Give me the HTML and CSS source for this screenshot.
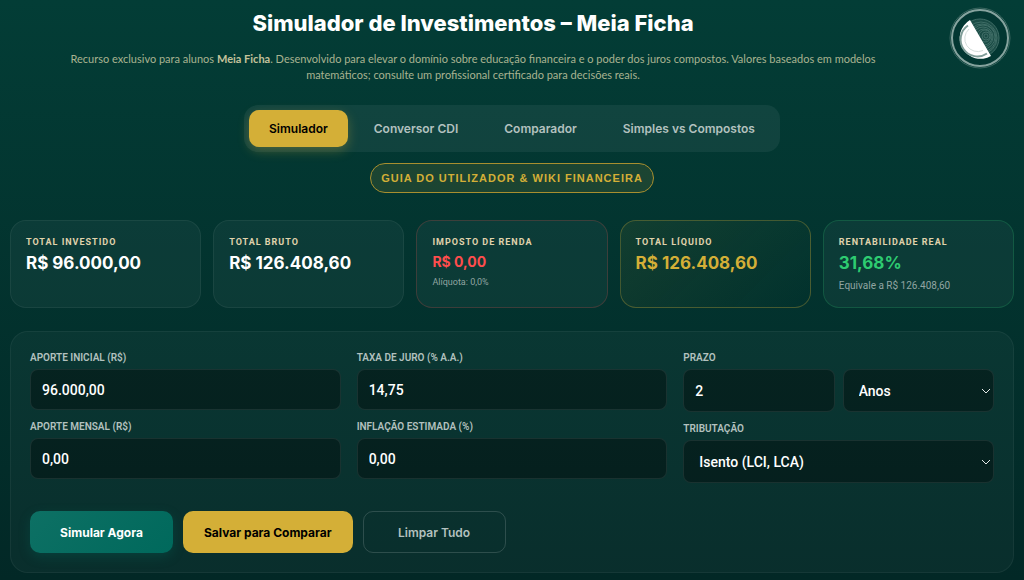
FILE: index.html
```
<!DOCTYPE html>
<html lang="pt">
<head>
<meta charset="UTF-8">
<meta name="viewport" content="width=device-width, initial-scale=1.0">
<title>Simulador de Investimentos – Meia Ficha</title>
<link rel="stylesheet" href="styles.css">
</head>
<body>

<header class="header">
    <div class="header-text">
        <h1>Simulador de Investimentos – Meia Ficha</h1>
        <p class="disclaimer">Recurso exclusivo para alunos <strong>Meia Ficha</strong>. Desenvolvido para elevar o domínio sobre educação financeira e o poder dos juros compostos. Valores baseados em modelos matemáticos; consulte um profissional certificado para decisões reais.</p>
    </div>
    <svg class="logo" viewBox="0 0 62 62" role="img" aria-label="Meia Ficha">
        <circle cx="31" cy="31" r="28" fill="#033732" stroke="#86a39e" stroke-width="2"/>
        <circle cx="31" cy="31" r="30" fill="none" stroke="#3b6660" stroke-width="1"/>
        <!-- engraved half -->
        <clipPath id="half"><path d="M21 13 L42 49 L60 49 L60 5 L21 5 Z"/></clipPath>
        <g clip-path="url(#half)" fill="none" stroke="#3f6d66" stroke-width="1">
            <circle cx="31" cy="31" r="19" fill="#1b4c46"/>
            <circle cx="37" cy="29" r="2"/>
            <circle cx="37" cy="29" r="4"/>
            <circle cx="36" cy="29" r="6"/>
            <circle cx="35" cy="30" r="8"/>
            <circle cx="34" cy="30" r="10"/>
            <circle cx="34" cy="30" r="12"/>
            <circle cx="33" cy="31" r="14"/>
            <circle cx="32" cy="31" r="16"/>
        </g>
        <!-- solid half -->
        <path d="M21 13 A20.500 20.500 0 0 0 42 49 Z" fill="#fff"/>
        <path d="M19 18.500 A16 16 0 0 0 38 46.500" fill="none" stroke="#7f9d98" stroke-width="2"/>
        <path d="M20 22 A13 13 0 0 0 34 43.500" fill="none" stroke="#d5dedc" stroke-width="1"/>
    </svg>
</header>

<nav class="tabs">
    <button type="button" class="tab active">Simulador</button>
    <button type="button" class="tab">Conversor CDI</button>
    <button type="button" class="tab">Comparador</button>
    <button type="button" class="tab">Simples vs Compostos</button>
</nav>

<div class="guide">
    <button type="button" class="guide-btn">GUIA DO UTILIZADOR &amp; WIKI FINANCEIRA</button>
</div>

<main>
    <section class="cards">
        <div class="card">
            <div class="card-label">Total investido</div>
            <div class="card-value">R$ 96.000,00</div>
        </div>
        <div class="card">
            <div class="card-label">Total bruto</div>
            <div class="card-value">R$ 126.408,60</div>
        </div>
        <div class="card card-tax">
            <div class="card-label">Imposto de renda</div>
            <div class="card-value">R$ 0,00</div>
            <div class="card-note">Alíquota: 0,0%</div>
        </div>
        <div class="card card-net">
            <div class="card-label">Total líquido</div>
            <div class="card-value">R$ 126.408,60</div>
        </div>
        <div class="card card-real">
            <div class="card-label">Rentabilidade real</div>
            <div class="card-value">31,68%</div>
            <div class="card-note">Equivale a R$ 126.408,60</div>
        </div>
    </section>

    <form class="panel">
        <div class="fields">
            <div class="column">
                <div class="field">
                    <label for="inicial">Aporte inicial (R$)</label>
                    <input type="text" id="inicial" value="96.000,00">
                </div>
                <div class="field">
                    <label for="mensal">Aporte mensal (R$)</label>
                    <input type="text" id="mensal" value="0,00">
                </div>
            </div>
            <div class="column">
                <div class="field">
                    <label for="taxa">Taxa de juro (% a.a.)</label>
                    <input type="text" id="taxa" value="14,75">
                </div>
                <div class="field">
                    <label for="inflacao">Inflação estimada (%)</label>
                    <input type="text" id="inflacao" value="0,00">
                </div>
            </div>
            <div class="column">
                <div class="field">
                    <label for="prazo">Prazo</label>
                    <div class="term">
                        <input type="text" id="prazo" value="2">
                        <div class="select">
                            <select id="unidade" aria-label="Unidade do prazo">
                                <option>Anos</option>
                                <option>Meses</option>
                            </select>
                            <svg class="chevron" viewBox="0 0 10 6"><path d="M1 1 L5 5 L9 1"/></svg>
                        </div>
                    </div>
                </div>
                <div class="field">
                    <label for="tributacao">Tributação</label>
                    <div class="select">
                        <select id="tributacao">
                            <option>Isento (LCI, LCA)</option>
                            <option>Tabela regressiva</option>
                        </select>
                        <svg class="chevron" viewBox="0 0 10 6"><path d="M1 1 L5 5 L9 1"/></svg>
                    </div>
                </div>
            </div>
        </div>

        <div class="actions">
            <button type="button" class="btn btn-run">Simular Agora</button>
            <button type="button" class="btn btn-save">Salvar para Comparar</button>
            <button type="button" class="btn btn-clear">Limpar Tudo</button>
        </div>
    </form>
</main>

</body>
</html>
```
FILE: styles.css
```
:root {
    --gold: #d4af37;
    --sand: #e0d3ac;
    --muted: #b3c1bf;
    --heading: "Inter", "Open Sans", sans-serif;
    --text: "Roboto", "Noto Sans", sans-serif;
}

* {
    box-sizing: border-box;
}

body {
    margin: 0;
    padding: 7px 10px;
    min-height: 100vh;
    background: linear-gradient(180deg, #033d36 0%, #022826 100%);
    color: #fff;
    font-family: var(--text);
}

.header {
    display: flex;
    align-items: flex-start;
    gap: 13px;
    padding-right: 3px;
}

.header-text {
    flex: 1;
    text-align: center;
}

.header h1 {
    margin: 0 0 12px;
    font-family: var(--heading);
    font-size: 22px;
    line-height: 32px;
    font-weight: 800;
}

.disclaimer {
    max-width: 820px;
    margin: 0 auto;
    color: #a9b391;
    font-family: "Lato", var(--text);
    font-size: 11px;
    line-height: 16px;
}

.disclaimer strong {
    color: #c4c29b;
}

.logo {
    flex: none;
    width: 62px;
    height: 62px;
}

.tabs {
    display: flex;
    gap: 6px;
    width: fit-content;
    margin: 22px auto 11px;
    padding: 5px;
    border-radius: 14px;
    background: rgba(255, 255, 255, 0.06);
}

.tab {
    padding: 0 20px;
    border: 0;
    border-radius: 10px;
    background: none;
    color: var(--muted);
    font-family: var(--heading);
    font-size: 12px;
    line-height: 37px;
    font-weight: 600;
}

.tab.active {
    background: var(--gold);
    color: #000;
    box-shadow: 0 4px 12px rgba(212, 175, 55, 0.3);
}

.guide {
    text-align: center;
}

.guide-btn {
    padding: 0 10px;
    border: 1px solid #a88f2f;
    border-radius: 15px;
    background: rgba(212, 175, 55, 0.12);
    color: var(--gold);
    font-family: "Liberation Sans", Arial, sans-serif;
    font-size: 11px;
    line-height: 28px;
    font-weight: bold;
    letter-spacing: 1px;
}

.cards {
    display: grid;
    grid-template-columns: repeat(5, 1fr);
    gap: 12px;
    margin-top: 27px;
}

.card {
    min-height: 88px;
    padding: 15px 15px 12px;
    border: 1px solid rgba(255, 255, 255, 0.06);
    border-radius: 16px;
    background: rgba(255, 255, 255, 0.04);
}

.card-label {
    color: var(--sand);
    font-size: 9px;
    line-height: 12px;
    font-weight: 700;
    letter-spacing: 1px;
    text-transform: uppercase;
}

.card-value {
    margin-top: 2px;
    font-family: var(--heading);
    font-size: 17px;
    line-height: 27px;
    font-weight: 700;
}

.card-note {
    color: #91a5a2;
    font-size: 9px;
    line-height: 18px;
}

.card-tax {
    border-color: rgba(255, 77, 77, 0.2);
}

.card-tax .card-value {
    color: #ff4d4d;
    font-size: 14px;
    line-height: 23px;
}

.card-net {
    border-color: rgba(212, 175, 55, 0.3);
    background: linear-gradient(135deg, rgba(212, 175, 55, 0.08), rgba(0, 0, 0, 0));
}

.card-net .card-value {
    color: var(--gold);
}

.card-real {
    border-color: rgba(46, 204, 113, 0.2);
}

.card-real .card-value {
    color: #2ecc71;
}

.card-real .card-note {
    font-size: 10px;
}

.panel {
    margin-top: 23px;
    padding: 19px;
    border: 1px solid rgba(255, 255, 255, 0.05);
    border-radius: 18px;
    background: rgba(255, 255, 255, 0.03);
}

.fields {
    display: grid;
    grid-template-columns: repeat(3, 1fr);
    gap: 16px;
}

.column {
    display: flex;
    flex-direction: column;
    gap: 10px;
}

.field label {
    display: block;
    margin-bottom: 4px;
    color: var(--muted);
    font-size: 10px;
    line-height: 14px;
    font-weight: 600;
    text-transform: uppercase;
}

.field input,
.field select {
    display: block;
    width: 100%;
    height: 41px;
    padding: 0 11px;
    border: 1px solid rgba(255, 255, 255, 0.08);
    border-radius: 8px;
    background: rgba(0, 0, 0, 0.35);
    color: #fff;
    font-family: var(--text);
    font-size: 14px;
    font-weight: 500;
}

.field select,
.term input {
    height: 43px;
}

.select {
    display: grid;
    align-items: center;
}

.select select,
.chevron {
    grid-area: 1 / 1;
}

.select select {
    padding: 0 15px;
    appearance: none;
}

.chevron {
    justify-self: end;
    width: 10px;
    height: 6px;
    margin-right: 3px;
    fill: none;
    stroke: #e5eae9;
    stroke-width: 1;
    pointer-events: none;
}

.field option {
    background: #03231f;
}

.term {
    display: grid;
    grid-template-columns: 1fr 1fr;
    gap: 8px;
}

.actions {
    display: flex;
    flex-wrap: wrap;
    gap: 10px;
    margin-top: 28px;
}

.btn {
    min-width: 143px;
    height: 42px;
    padding: 0 21px;
    border: 1px solid transparent;
    border-radius: 10px;
    font-family: var(--heading);
    font-size: 12px;
    font-weight: 700;
}

.btn-run {
    border: 0;
    background: linear-gradient(135deg, #0d7064, #00695c);
    color: #fff;
    box-shadow: 0 4px 12px rgba(0, 105, 92, 0.3);
}

.btn-save {
    border: 0;
    background: var(--gold);
    color: #000;
}

.btn-clear {
    border-color: rgba(255, 255, 255, 0.15);
    background: none;
    color: var(--muted);
    font-weight: 600;
}
```
